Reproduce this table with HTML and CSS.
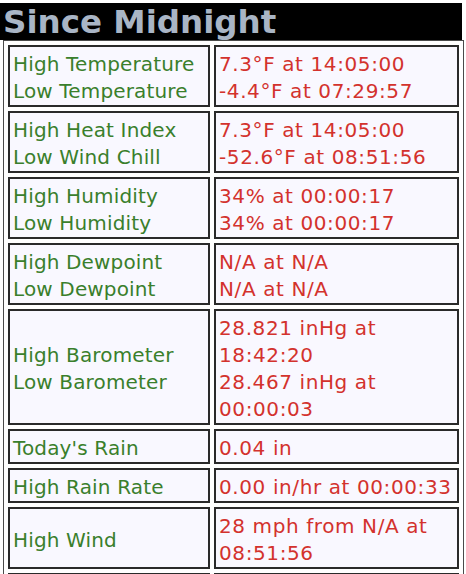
FILE: index.html
```html
<!DOCTYPE html>
<html>
<head>
<meta charset="utf-8">
<link rel="stylesheet" href="styles.css">
</head>
<body>
<h2 class="title">Since Midnight</h2>
<table class="stats">
  <tr><td class="label">High Temperature<br>Low Temperature</td><td class="value">7.3°F at 14:05:00<br>-4.4°F at 07:29:57</td></tr>
  <tr><td class="label">High Heat Index<br>Low Wind Chill</td><td class="value">7.3°F at 14:05:00<br>-52.6°F at 08:51:56</td></tr>
  <tr><td class="label">High Humidity<br>Low Humidity</td><td class="value">34% at 00:00:17<br>34% at 00:00:17</td></tr>
  <tr><td class="label">High Dewpoint<br>Low Dewpoint</td><td class="value">N/A at N/A<br>N/A at N/A</td></tr>
  <tr><td class="label">High Barometer<br>Low Barometer</td><td class="value">28.821 inHg at 18:42:20<br>28.467 inHg at 00:00:03</td></tr>
  <tr><td class="label">Today's Rain</td><td class="value">0.04 in</td></tr>
  <tr><td class="label">High Rain Rate</td><td class="value">0.00 in/hr at 00:00:33</td></tr>
  <tr><td class="label">High Wind</td><td class="value">28 mph from N/A at 08:51:56</td></tr>
  <tr><td class="label">Average Wind</td><td class="value">3 mph</td></tr>
</table>
</body>
</html>
```
FILE: styles.css
```css
html, body {
  margin: 0;
  padding: 0;
  background: #ffffff;
}
body {
  font-family: "DejaVu Sans", Verdana, sans-serif;
  width: 466px;
  overflow: hidden;
}
.title {
  margin: 3px 4px 0 0;
  padding: 0 0 0 3px;
  height: 37px;
  background: #000000;
  color: #a9b5c5;
  font-size: 32.5px;
  line-height: 38px;
  font-weight: bold;
  white-space: nowrap;
}
.stats {
  margin: 0 0 0 3px;
  width: 461px;
  table-layout: fixed;
  border: 1px solid #4a4a4a;
  border-spacing: 4px;
  background: #fff;
}
.stats td {
  border: 2px solid #2a2a2a;
  background: #f9f8ff;
  font-size: 20px;
  line-height: 27px;
  padding: 4px 3px 0 3px;
  vertical-align: middle;
}
.label {
  box-sizing: border-box;
  width: 202px;
  color: #3a7f2c;
  letter-spacing: 0.15px;
}
.value {
  color: #d3322d;
  letter-spacing: 0.6px;
}
```
